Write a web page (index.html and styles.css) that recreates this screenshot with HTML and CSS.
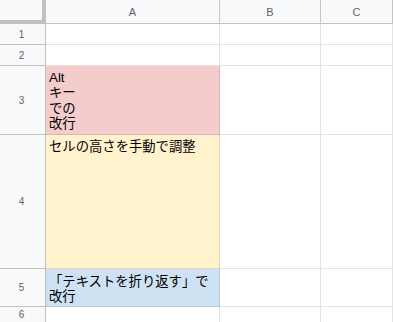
FILE: index.html
```html
<!DOCTYPE html>
<html>
<head>
  <title>シート</title>
  <link rel="stylesheet" href="styles.css">
</head>
<body>
  <div class="sheet">
    <div class="corner"></div>
    <div class="col-head">A</div>
    <div class="col-head">B</div>
    <div class="col-head">C</div>

    <div class="row-head">1</div>
    <div class="cell"></div>
    <div class="cell"></div>
    <div class="cell"></div>

    <div class="row-head">2</div>
    <div class="cell"></div>
    <div class="cell"></div>
    <div class="cell"></div>

    <div class="row-head">3</div>
    <div class="cell pink bottom">Alt<br>キー<br>での<br>改行</div>
    <div class="cell"></div>
    <div class="cell"></div>

    <div class="row-head">4</div>
    <div class="cell yellow top">セルの高さを手動で調整</div>
    <div class="cell"></div>
    <div class="cell"></div>

    <div class="row-head">5</div>
    <div class="cell blue bottom">「テキストを折り返す」で改行</div>
    <div class="cell"></div>
    <div class="cell"></div>

    <div class="row-head">6</div>
    <div class="cell"></div>
    <div class="cell"></div>
    <div class="cell"></div>
  </div>
</body>
</html>
```

FILE: styles.css
```css
body {
  margin: 0;
  padding: 0;
  background-color: #fff;
  font-family: "Liberation Sans", Arial, "Noto Sans CJK JP", sans-serif;
}

.sheet {
  display: grid;
  grid-template-columns: 46px 174px 101px 1fr;
  grid-template-rows: 24px 21px 21px 69px 134px 38px 16px;
  width: 393px;
  height: 322px;
  overflow: hidden;
}

.corner {
  background-color: #f8f9fa;
  border-right: 4px solid #c0c0c0;
  border-bottom: 4px solid #c0c0c0;
}

.col-head {
  background-color: #f8f9fa;
  border-right: 1px solid #c4c4c4;
  border-bottom: 1px solid #c0c0c0;
  color: #5f6368;
  font-size: 11px;
  display: flex;
  align-items: center;
  justify-content: center;
  padding-top: 1px;
}

.row-head {
  background-color: #f8f9fa;
  border-right: 1px solid #c0c0c0;
  border-bottom: 1px solid #c0c0c0;
  color: #5f6368;
  font-size: 10px;
  display: flex;
  align-items: center;
  justify-content: center;
  padding-right: 2px;
}

.cell {
  border-right: 1px solid rgba(0, 0, 0, 0.11);
  border-bottom: 1px solid rgba(0, 0, 0, 0.11);
  padding: 0 3px 2px 3px;
  font-size: 13.33px;
  line-height: 15.6px;
  color: #000;
  display: flex;
  flex-direction: column;
  overflow: hidden;
}

.cell.bottom {
  justify-content: flex-end;
}

.cell.top {
  justify-content: flex-start;
  padding-top: 4px;
}

.pink {
  background-color: #f4cccc;
}

.yellow {
  background-color: #fff2cc;
}

.blue {
  background-color: #cfe2f3;
  line-height: 15px;
}
```
